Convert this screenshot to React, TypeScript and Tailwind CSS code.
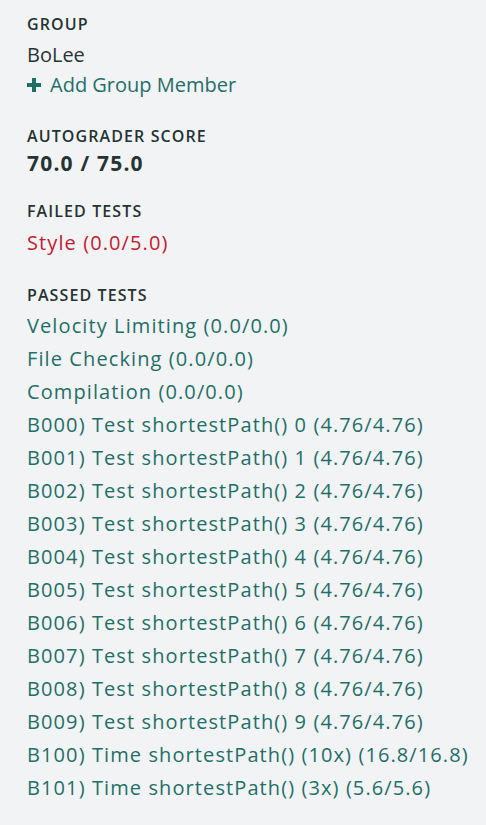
const passed = [
  'Velocity Limiting (0.0/0.0)',
  'File Checking (0.0/0.0)',
  'Compilation (0.0/0.0)',
  'B000) Test shortestPath() 0 (4.76/4.76)',
  'B001) Test shortestPath() 1 (4.76/4.76)',
  'B002) Test shortestPath() 2 (4.76/4.76)',
  'B003) Test shortestPath() 3 (4.76/4.76)',
  'B004) Test shortestPath() 4 (4.76/4.76)',
  'B005) Test shortestPath() 5 (4.76/4.76)',
  'B006) Test shortestPath() 6 (4.76/4.76)',
  'B007) Test shortestPath() 7 (4.76/4.76)',
  'B008) Test shortestPath() 8 (4.76/4.76)',
  'B009) Test shortestPath() 9 (4.76/4.76)',
  'B100) Time shortestPath() (10x) (16.8/16.8)',
  'B101) Time shortestPath() (3x) (5.6/5.6)',
];

function Heading({ children }: { children: React.ReactNode }) {
  return (
    <h3 className="text-[16px] leading-[24px] font-semibold uppercase tracking-[1.1px] text-[#253332]">
      {children}
    </h3>
  );
}

export default function App() {
  return (
    <div
      className="min-h-screen bg-[#f2f3f5] pl-[27px] pr-2 pt-[12px] pb-8 text-[20px]"
      style={{ fontFamily: '"Open Sans", Lato, sans-serif' }}
    >
      <section>
        <Heading>Group</Heading>
        <div className="mt-[4px] leading-[30px] text-[#2b3433]">BoLee</div>
        <a href="#" className="flex items-center gap-[9px] leading-[30px] text-[#1f6f67]">
          <svg width="14" height="14" viewBox="0 0 14 14" className="shrink-0">
            <path d="M5 0h4v5h5v4h-5v5h-4v-5h-5v-4h5z" fill="#1f6f67" />
          </svg>
          Add Group Member
        </a>
      </section>

      <section className="mt-[24px]">
        <Heading>Autograder Score</Heading>
        <div className="mt-[1px] leading-[28px] text-[21px] font-bold tracking-[1.2px] text-[#253332]">
          70.0 / 75.0
        </div>
      </section>

      <section className="mt-[22px]">
        <Heading>Failed Tests</Heading>
        <div className="mt-[3px] leading-[33px] tracking-[1.1px] text-[#c22030]">Style (0.0/5.0)</div>
      </section>

      <section className="mt-[24px]">
        <Heading>Passed Tests</Heading>
        <ul className="mt-[2px] leading-[33px] tracking-[1.1px] text-[#1f6f67]">
          {passed.map((t) => (
            <li key={t} className="whitespace-nowrap">
              {t}
            </li>
          ))}
        </ul>
      </section>
    </div>
  );
}
